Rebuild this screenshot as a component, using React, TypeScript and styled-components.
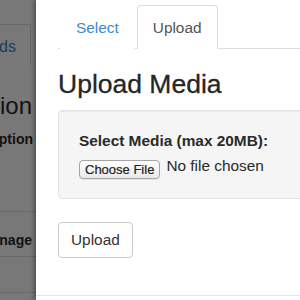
import React from "react";
import styled, { createGlobalStyle } from "styled-components";

const GlobalStyle = createGlobalStyle`
  html, body {
    margin: 0;
    padding: 0;
    width: 300px;
    height: 300px;
    overflow: hidden;
    background: #fff;
  }
  body {
    font-family: "Liberation Sans", Arial, sans-serif;
    font-size: 15.4px;
    line-height: 22px;
    color: #333;
  }
  * {
    box-sizing: border-box;
  }
`;

const Page = styled.div`
  display: flex;
  width: 300px;
  height: 300px;
`;

/* the page behind the modal, dimmed by the backdrop */
const Backdrop = styled.div`
  position: relative;
  width: 36px;
  flex-shrink: 0;
  overflow: hidden;
  background: #fff;
  display: flex;
  flex-direction: column;

  &::after {
    content: "";
    position: absolute;
    inset: 0;
    background: rgba(0, 0, 0, 0.53);
  }
`;

const BgRow = styled.div<{ $top: number; $right: number }>`
  display: flex;
  justify-content: flex-end;
  margin-top: ${(p) => p.$top}px;
  padding-right: ${(p) => p.$right}px;
  white-space: nowrap;
`;

const BgTab = styled.div`
  height: 41px;
  padding: 11px 14px 0 0;
  border-top: 1px solid #ddd;
  border-right: 1px solid #ddd;
  color: #3f7fc4;
  font-size: 16px;
`;

const BgHeading = styled.span`
  font-size: 24px;
  line-height: 29px;
  color: #2a2a2a;
`;

const BgLabel = styled.span<{ $size: number }>`
  font-size: ${(p) => p.$size}px;
  font-weight: bold;
  color: #2a2a2a;
`;

const BgRule = styled.div<{ $top: number }>`
  margin-top: ${(p) => p.$top}px;
  height: 1px;
  background: #ddd;
`;

const Modal = styled.div`
  flex: 1;
  position: relative;
  z-index: 1;
  background: #fff;
  box-shadow: -2px 0 4px rgba(0, 0, 0, 0.35);
  overflow: hidden;
  display: flex;
  flex-direction: column;
  padding-top: 5px;
`;

const Body = styled.div`
  padding-left: 22px;
`;

const Tabs = styled.ul`
  display: flex;
  margin: 0;
  padding: 0 0 0 2px;
  list-style: none;
  border-bottom: 1px solid #ddd;
`;

const Tab = styled.li<{ $active?: boolean }>`
  margin: 0 2px -1px 0;
  padding: 11px 15px 9px;
  height: 44px;
  border: 1px solid ${(p) => (p.$active ? "#ddd" : "transparent")};
  border-bottom-color: ${(p) => (p.$active ? "#fff" : "transparent")};
  border-radius: 4px 4px 0 0;
  background: #fff;
  color: ${(p) => (p.$active ? "#555" : "#428bca")};
  cursor: pointer;
`;

const Heading = styled.h3`
  margin: 21px 0 11px;
  font-size: 26.5px;
  line-height: 29px;
  font-weight: normal;
  color: #262626;
  -webkit-text-stroke: 0.3px #262626;
`;

const Well = styled.div`
  margin-right: -30px;
  padding: 19px 20px 19px 20px;
  background: #f5f5f5;
  border: 1px solid #e3e3e3;
  border-radius: 4px;
  box-shadow: inset 0 1px 1px rgba(0, 0, 0, 0.05);
`;

const FieldLabel = styled.label`
  display: block;
  margin-bottom: 3px;
  font-weight: bold;
  color: #2a2a2a;
`;

const FileRow = styled.label`
  display: flex;
  align-items: flex-start;
  gap: 6px;
  cursor: pointer;

  input {
    display: none;
  }
`;

const FileButton = styled.span`
  margin-top: 5px;
  height: 19px;
  padding: 0 5px;
  border: 1px solid #a4a4a4;
  border-radius: 4px;
  background: linear-gradient(#ffffff, #e9e9e9);
  box-shadow: 0 1px 0 rgba(0, 0, 0, 0.06);
  font-size: 13px;
  line-height: 17px;
  color: #222;
  -webkit-text-stroke: 0.2px #222;
`;

const FileName = styled.span`
  color: #2a2a2a;
`;

const Button = styled.button`
  display: block;
  margin-top: 23px;
  padding: 6px 12px;
  border: 1px solid #ccc;
  border-radius: 4px;
  background: #fff;
  font-family: inherit;
  font-size: 15.4px;
  line-height: 22px;
  color: #333;
`;

const Footer = styled.div`
  margin-top: 37px;
  border-top: 1px solid #e5e5e5;
  flex: 1;
`;

export default function App() {
  return (
    <>
      <GlobalStyle />
      <Page>
        <Backdrop>
          <BgRow $top={24} $right={5}>
            <BgTab>ds</BgTab>
          </BgRow>
          <BgRow $top={26} $right={4}>
            <BgHeading>ion</BgHeading>
          </BgRow>
          <BgRow $top={8} $right={3}>
            <BgLabel $size={14}>ption</BgLabel>
          </BgRow>
          <BgRule $top={61} />
          <BgRow $top={17} $right={4}>
            <BgLabel $size={14}>nage</BgLabel>
          </BgRow>
          <BgRule $top={5} />
          <BgRule $top={35} />
        </Backdrop>
        <Modal>
          <Body>
            <Tabs>
              <Tab>Select</Tab>
              <Tab $active>Upload</Tab>
            </Tabs>
            <Heading>Upload Media</Heading>
            <Well>
              <FieldLabel>Select Media (max 20MB):</FieldLabel>
              <FileRow>
                <input type="file" />
                <FileButton>Choose File</FileButton>
                <FileName>No file chosen</FileName>
              </FileRow>
            </Well>
            <Button>Upload</Button>
          </Body>
          <Footer />
        </Modal>
      </Page>
    </>
  );
}
